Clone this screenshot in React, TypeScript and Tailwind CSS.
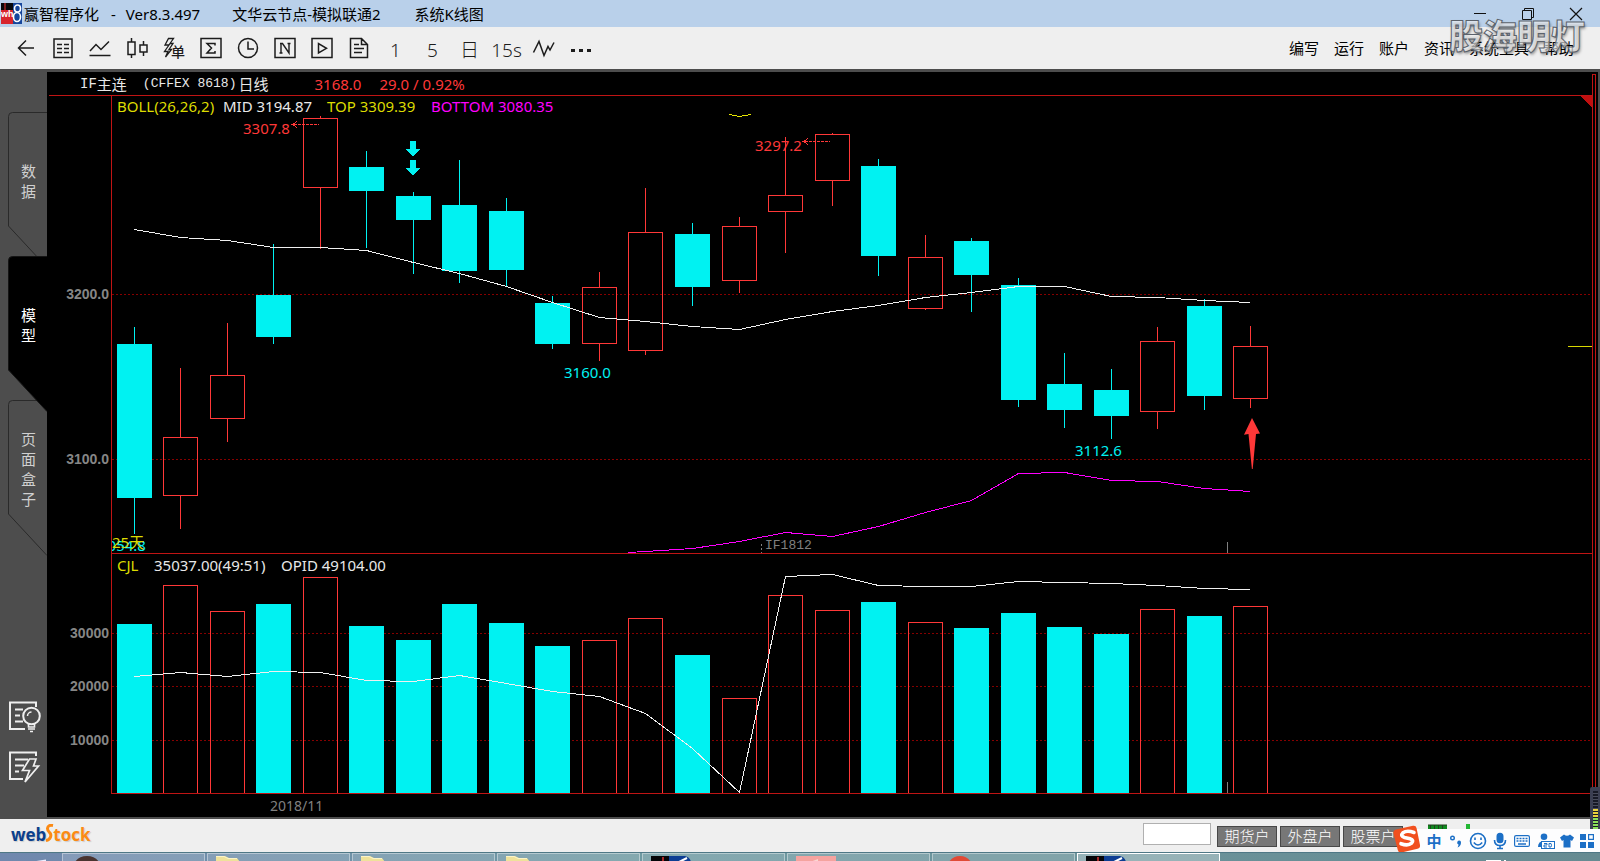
import React from 'react';
import type { ReactNode } from 'react';

type Candle = {
  x: number;
  up: boolean;
  high: number;
  top: number;
  bottom: number;
  low: number;
  volume: number;
};

const row = (x: number, up: boolean, high: number, top: number, bottom: number, low: number, volume: number): Candle => ({
  x, up, high, top, bottom, low, volume,
});

const candles: Candle[] = [
  row(117, false, 327, 344, 498, 534, 624),
  row(163, true, 368, 437, 496, 529, 585),
  row(210, true, 323, 375, 419, 442, 611),
  row(256, false, 244, 295, 337, 344, 604),
  row(303, true, 116, 118, 188, 249, 577),
  row(349, false, 151, 167, 191, 248, 626),
  row(396, false, 192, 196, 220, 274, 640),
  row(442, false, 160, 205, 271, 283, 604),
  row(489, false, 198, 211, 270, 286, 623),
  row(535, false, 296, 303, 344, 349, 646),
  row(582, true, 272, 287, 344, 361, 640),
  row(628, true, 188, 232, 351, 355, 618),
  row(675, false, 223, 234, 287, 306, 655),
  row(722, true, 217, 226, 281, 293, 698),
  row(768, true, 137, 195, 212, 253, 595),
  row(815, true, 133, 134, 181, 206, 610),
  row(861, false, 159, 166, 256, 276, 602),
  row(908, true, 235, 257, 309, 310, 622),
  row(954, false, 238, 241, 275, 312, 628),
  row(1001, false, 278, 285, 400, 407, 613),
  row(1047, false, 353, 384, 410, 428, 627),
  row(1094, false, 369, 390, 416, 439, 634),
  row(1140, true, 327, 341, 412, 429, 609),
  row(1187, false, 299, 306, 396, 410, 616),
  row(1233, true, 326, 346, 399, 408, 606),
];

const BODY = 35;
const mid = [229, 237, 240, 247, 247, 250, 262, 273, 286, 302, 317, 321, 326, 329, 319, 311, 305, 297, 292, 286, 286, 296, 297, 300, 302];
const opid = [676, 672, 676, 671, 672, 680, 681, 675, 683, 691, 696, 713, 748, 792, 576, 574, 585, 586, 586, 581, 582, 583, 585, 588, 589];
const lower = [551, 548, 541, 532, 536, 526, 512, 500, 473, 472, 480, 481, 488, 491];

const toPoints = (ys: number[], from = 0) =>
  ys.map((y, i) => `${candles[i + from].x + 17.5},${y + 0.5}`).join(' ');

const PLOT = { x: 112, width: 1480 };
const PRICE = { y: 96, height: 457 };
const VOLUME = { y: 554, height: 239 };

const at = (x: number, y: number, box: { y: number; height: number }) => ({
  left: `${((x - PLOT.x) / PLOT.width) * 100}%`,
  top: `${((y - box.y) / box.height) * 100}%`,
});

const RED = '#ff3838';
const CYAN = '#00f2f2';

function Grid({ ys }: { ys: number[] }) {
  return (
    <g stroke="#860000" strokeDasharray="2 2">
      {ys.map((y) => (
        <line key={y} x1={112} x2={1592} y1={y + 0.5} y2={y + 0.5} />
      ))}
    </g>
  );
}

function Body({ x, top, bottom, up }: { x: number; top: number; bottom: number; up: boolean }) {
  return up ? (
    <rect x={x + 0.5} y={top + 0.5} width={BODY - 1} height={bottom - top - 1} fill="none" stroke={RED} />
  ) : (
    <rect x={x} y={top} width={BODY} height={bottom - top} fill={CYAN} />
  );
}

function PricePlot() {
  return (
    <svg className="block h-full w-full" viewBox="112 96 1480 457" preserveAspectRatio="none" shapeRendering="crispEdges" aria-hidden="true">
      <Grid ys={[294, 459]} />
      {candles.map((c) => (
        <g key={c.x}>
          <rect x={c.x + 17} y={c.high} width={1} height={c.top - c.high} fill={c.up ? RED : CYAN} />
          <rect x={c.x + 17} y={c.bottom} width={1} height={c.low - c.bottom} fill={c.up ? RED : CYAN} />
          <Body x={c.x} top={c.top} bottom={c.bottom} up={c.up} />
        </g>
      ))}
      <polyline points={toPoints(mid)} fill="none" stroke="#f0f0f0" />
      <polyline points={`628,552.5 ${toPoints(lower, 11)}`} fill="none" stroke="#f0f" />
      <polyline points="729,114.5 739.5,116.5 751,114.5" fill="none" stroke="#e6e600" />
      <line x1={1568} x2={1592} y1={346.5} y2={346.5} stroke="#d8d800" />
      <g fill="none" stroke={RED}>
        <path d="M294 124.5H319" strokeDasharray="3 1" />
        <path d="M297 121.5l-4 3 4 3M291 124.5h4" />
        <path d="M805 141.5H830" strokeDasharray="3 1" />
        <path d="M808 138.5l-4 3 4 3M802 141.5h4" />
      </g>
      <g fill={CYAN}>
        <path d="M410 141h6v8h4l-7 8-7-8h4z" />
        <path d="M410 160h6v8h4l-7 8-7-8h4z" />
      </g>
      <path d="M1252 418l8 15.500-4 .5-3.300 35h-.8l-3.400-35-4.500.8z" fill={RED} shapeRendering="auto" />
      <path d="M761.500 544V553" stroke="#808080" strokeDasharray="2 2" />
      <path d="M1227.500 542V553" stroke="#808080" />
      <path d="M1580 96h12v12z" fill="#c00f0f" />
    </svg>
  );
}

function VolumePlot() {
  return (
    <svg className="block h-full w-full" viewBox="112 554 1480 239" preserveAspectRatio="none" shapeRendering="crispEdges" aria-hidden="true">
      <Grid ys={[633, 686, 740]} />
      {candles.map((c) => (
        <Body key={c.x} x={c.x} top={c.volume} bottom={c.up ? 795 : 793} up={c.up} />
      ))}
      <polyline points={toPoints(opid)} fill="none" stroke="#f0f0f0" />
      <path d="M1227.500 782V793" stroke="#808080" />
    </svg>
  );
}

function Note({ x, y, box, className, children }: { x: number; y: number; box: { y: number; height: number }; className: string; children: ReactNode }) {
  return (
    <span className={`absolute -translate-y-1/2 whitespace-nowrap leading-5 ${className}`} style={at(x, y, box)}>
      {children}
    </span>
  );
}

function AxisLabel({ y, box, children }: { y: number; box: { y: number; height: number }; children: ReactNode }) {
  return (
    <span
      className="absolute right-[2px] -translate-y-1/2 font-['Liberation_Sans',sans-serif] text-sm leading-4 font-bold text-[#868686]"
      style={{ top: at(0, y, box).top }}
    >
      {children}
    </span>
  );
}

const Icon = ({ children }: { children: ReactNode }) => (
  <svg width="24" height="24" viewBox="0 0 24 24" fill="none" stroke="#1c1c1c" strokeWidth="1.500">
    {children}
  </svg>
);

const tools: { name: string; node: ReactNode }[] = [
  { name: '返回', node: <Icon><path d="M20 12H4.500M12 4.500L4.500 12l7.500 7.500" /></Icon> },
  { name: '报价', node: <Icon><rect x="3" y="3" width="18" height="18.500" /><path d="M6 8.500h5M13 8.500h5M6 12.500h5M13 12.500h5M6 16.500h5M13 16.500h5" /></Icon> },
  { name: '分时', node: <Icon><path d="M2 15l6-6.500 5 5 8-8M1.500 19.500h21" /></Icon> },
  { name: 'K线', node: <Icon><rect x="3" y="6" width="7" height="12.500" /><path d="M6.500 2v4M6.500 18.500V22M18.500 5v4M18.500 16v4" /><rect x="15" y="9" width="7" height="7" /></Icon> },
  {
    name: '闪电单',
    node: (
      <Icon>
        <path d="M11.500 2.500H6.500L3 9h4L2.500 15.500H6L3.500 21l6-7.500H7l4-6H8z" strokeWidth="1.300" />
        <text x="9" y="20.500" fontSize="14" fontWeight="500" fontFamily="Noto Sans CJK SC" fill="#1c1c1c" stroke="none">单</text>
      </Icon>
    ),
  },
  { name: '求和', node: <Icon><rect x="2" y="2.500" width="20" height="19" /><path d="M16 9.500V7.500H8l4.500 4.500L8 17h8v-2" /></Icon> },
  { name: '周期', node: <Icon><circle cx="12" cy="12" r="9.500" /><path d="M12 5.500V13h6" /></Icon> },
  { name: '指标', node: <Icon><rect x="2" y="2.500" width="20" height="19" /><path d="M6.500 17h3M14.500 7.500h3M7 7.500h2.500l6.500 9.500V7.500M8 17V7.500" strokeWidth="1.400" /></Icon> },
  { name: '播放', node: <Icon><rect x="2" y="2.500" width="20" height="19" /><path d="M8.500 7.500v9.500l8-4.700z" /></Icon> },
  { name: '文档', node: <Icon><path d="M3.500 2.500h11l6 6v13h-17zM14.500 2.500v6h6M7 8.500h5M7 12.500h10M7 16.500h8" /></Icon> },
  { name: '1分钟', node: <span className="pt-[3px]">1</span> },
  { name: '5分钟', node: <span className="pt-[3px]">5</span> },
  { name: '日线', node: <span className="pt-[3px]">日</span> },
  { name: '15秒', node: <span className="pt-[3px]">15s</span> },
  { name: '波动', node: <Icon><path d="M1.500 16.500L7 5.500l5 14 4-9 2 3.500 4-7.500" /></Icon> },
  { name: '更多', node: <Icon><path d="M2 14.500h4M10 14.500h4M18 14.500h4" strokeWidth="3" /></Icon> },
];

function BrandMark() {
  return (
    <svg width="21" height="21" viewBox="0 0 21 21" aria-hidden="true">
      <rect width="21" height="21" fill="#08080c" />
      <path d="M0 7h12v14H0z" fill="#d8242c" />
      <path d="M12 0h9v21h-9z" fill="#16469c" />
      <path d="M4 0v7" stroke="#e33" />
      <text x="0" y="14" fontSize="9" fontWeight="bold" fontFamily="Liberation Sans" fill="#fff">wh</text>
      <ellipse cx="16.500" cy="5.500" rx="3" ry="3.500" fill="none" stroke="#fff" strokeWidth="1.600" />
      <ellipse cx="16" cy="14" rx="3.500" ry="4.500" fill="none" stroke="#fff" strokeWidth="1.600" />
    </svg>
  );
}

function TitleBar() {
  return (
    <header className="relative z-30 flex h-[27px] shrink-0 items-center bg-[#b9d0ea] text-[15px] leading-5 text-black">
      <div className="flex items-center gap-[2px] pl-px">
        <BrandMark />
        <h1 className="whitespace-pre">赢智程序化</h1>
      </div>
      <span className="ml-3">-</span>
      <span className="ml-[10px]">Ver8.3.497</span>
      <span className="ml-8">文华云节点-模拟联通2</span>
      <span className="ml-[34px]">系统K线图</span>
      <div className="ml-auto flex">
        <button aria-label="最小化" className="flex w-12 justify-center">
          <svg width="14" height="14" viewBox="0 0 14 14" stroke="#111" fill="none"><path d="M1 6.500h12" /></svg>
        </button>
        <button aria-label="还原" className="flex w-12 justify-center">
          <svg width="14" height="14" viewBox="0 0 14 14" stroke="#111" fill="none"><path d="M1.500 3.500h9v9h-9zM3.500 3.500v-2h9v9h-2" /></svg>
        </button>
        <button aria-label="关闭" className="flex w-12 justify-center">
          <svg width="14" height="14" viewBox="0 0 14 14" stroke="#111" fill="none"><path d="M1 1l12 12M13 1L1 13" strokeWidth="1.200" /></svg>
        </button>
      </div>
      <span
        className="pointer-events-none absolute top-[14px] right-[15px] text-[34px] leading-[44px] font-black text-white/60 [-webkit-text-stroke:1px_#5b626b] [text-shadow:1px_2px_3px_rgba(0,0,0,0.4)]"
      >
        股海明灯
      </span>
    </header>
  );
}

function ToolBar() {
  return (
    <div className="flex h-[42px] shrink-0 items-center justify-between bg-[#efefef]">
      <div className="flex pl-[7px]">
        {tools.map((t) => (
          <button key={t.name} aria-label={t.name} className="flex h-8 w-[37px] items-center justify-center text-[19px] leading-6 font-light text-[#1c1c1c]">
            {t.node}
          </button>
        ))}
      </div>
      <nav className="flex gap-[15px] pr-[26px] text-[15px] leading-5 text-black">
        {['编写', '运行', '账户', '资讯', '系统工具', '帮助'].map((m) => (
          <a key={m} href="#" className="whitespace-nowrap">{m}</a>
        ))}
      </nav>
    </div>
  );
}

function SideTab({ label, active }: { label: string; active?: boolean }) {
  return (
    <button className={`relative -mb-3 ml-2 block h-[156px] w-[39px] ${active ? 'z-10 text-white' : 'text-[#d0d0d0]'}`}>
      <svg className="absolute inset-0" width="39" height="156" viewBox="0 0 39 156" aria-hidden="true">
        <path d="M39 .5H4.500Q.5 .5 .5 4.500V114L39 155.500" fill={active ? '#000' : '#4d4d4d'} stroke={active ? '#151515' : '#2a2a2a'} />
      </svg>
      <span className="relative flex h-full flex-col items-center justify-center pb-[18px] pl-[2px] text-[15px] leading-5">
        {label.split('').map((ch) => (
          <span key={ch}>{ch}</span>
        ))}
      </span>
    </button>
  );
}

function SideBar() {
  return (
    <aside className="flex w-[47px] shrink-0 flex-col bg-[#4d4d4d] pt-[43px]">
      <SideTab label="数据" />
      <SideTab label="模型" active />
      <SideTab label="页面盒子" />
      <div className="mt-auto mb-9 flex flex-col gap-[18px] pl-2">
        <button aria-label="提示">
          <svg width="34" height="32" viewBox="0 0 34 32" fill="none" stroke="#efefef" strokeWidth="2">
            <path d="M28 6V1.500H2V28h15M7 8.500h8M7 14.500h5M7 20.500h8" />
            <circle cx="23.500" cy="15" r="8.300" />
            <path d="M19.500 15a4 4 0 0 1 4-4" strokeWidth="1.500" />
            <path d="M20.500 23v3h6v-3M20 28h7M22 30.500h3" strokeWidth="1.600" />
          </svg>
        </button>
        <button aria-label="快捷">
          <svg width="34" height="32" viewBox="0 0 34 32" fill="none" stroke="#efefef" strokeWidth="2">
            <path d="M28 5V1.500H2V28h13M7 8.500h13M7 14.500h9M7 20.500h4" />
            <path d="M21.500 8h6.500l-2.500 7h5L17 31l4.500-11.500H14.500z" strokeWidth="1.700" />
          </svg>
        </button>
      </div>
    </aside>
  );
}

function Chart() {
  return (
    <section className="flex min-w-0 flex-1 bg-black font-['Noto_Sans','Noto_Sans_CJK_SC',sans-serif] text-[15px]">
      <div className="flex min-w-0 flex-1 flex-col">
        <div className="ml-[2px] flex h-6 shrink-0 items-center border-b border-[#c01414] pl-[31px] leading-5 whitespace-pre text-[#e8e8e8]">
          <span className="font-['Liberation_Mono','Noto_Sans_CJK_SC',monospace] text-sm">IF</span>
          <span>主连</span>
          <span className="ml-4 font-['Liberation_Mono',monospace] text-[13px]">(CFFEX 8618)</span>
          <span className="ml-[2px]">日线</span>
          <span className="ml-[46px] text-[#ff3838]">3168.0</span>
          <span className="ml-[18px] text-[#ff3838]">29.0 / 0.92%</span>
        </div>
        <div className="flex min-h-0 grow-[457] basis-0">
          <div className="relative w-16 shrink-0">
            <AxisLabel y={294} box={PRICE}>3200.0</AxisLabel>
            <AxisLabel y={459} box={PRICE}>3100.0</AxisLabel>
          </div>
          <div className="relative min-w-0 flex-1 overflow-hidden border-l border-[#c01414]">
            <PricePlot />
            <div className="absolute top-0 left-[5px] flex leading-5 whitespace-nowrap">
              <span className="w-[106px] text-[#dcdc00]">BOLL(26,26,2)</span>
              <span className="w-[104px] text-[#e8e8e8]">MID 3194.87</span>
              <span className="w-[104px] text-[#dcdc00]">TOP 3309.39</span>
              <span className="text-[#f0f]">BOTTOM 3080.35</span>
            </div>
            <Note x={243} y={128} box={PRICE} className="text-[#ff3838]">3307.8</Note>
            <Note x={755} y={145} box={PRICE} className="text-[#ff3838]">3297.2</Note>
            <Note x={564} y={372} box={PRICE} className="text-[#00f2f2]">3160.0</Note>
            <Note x={1075} y={450} box={PRICE} className="text-[#00f2f2]">3112.6</Note>
            <Note x={99} y={545} box={PRICE} className="text-[#00f2f2]">3054.8</Note>
            <Note x={112} y={542} box={PRICE} className="text-[#dcdc00]">25天</Note>
            <Note x={765} y={546} box={PRICE} className="font-['Liberation_Mono',monospace] text-[13px] text-[#808080]">IF1812</Note>
          </div>
        </div>
        <div className="flex min-h-0 grow-[241] basis-0">
          <div className="relative w-16 shrink-0">
            <AxisLabel y={633} box={VOLUME}>30000</AxisLabel>
            <AxisLabel y={686} box={VOLUME}>20000</AxisLabel>
            <AxisLabel y={739} box={VOLUME}>10000</AxisLabel>
          </div>
          <div className="relative min-w-0 flex-1 overflow-hidden border-y border-l border-[#c01414]">
            <VolumePlot />
            <div className="absolute top-px left-[5px] flex leading-5 whitespace-nowrap text-[#e8e8e8]">
              <span className="w-[37px] text-[#dcdc00]">CJL</span>
              <span className="w-[127px]">35037.00(49:51)</span>
              <span>OPID 49104.00</span>
            </div>
          </div>
        </div>
        <div className="h-[23px] shrink-0 pl-[223px] text-sm leading-6 text-[#808080]">2018/11</div>
      </div>
      <div className="mt-[2px] mr-[2px] w-1 shrink-0 border border-[#c01414]" />
    </section>
  );
}

function ImeBar() {
  return (
    <div className="absolute right-0 bottom-0 flex h-[23px] items-center bg-[#fdfdfe] pr-px pl-6 text-[#1c6fc6]">
      <svg className="absolute -top-1 -left-[7px]" width="30" height="29" viewBox="0 0 30 29" aria-hidden="true">
        <path d="M4 4.500L21 .8q3-.5 3.600 2.400L28 20q.5 3-2.500 3.800L9.500 27.500q-3 .6-3.700-2.400L1.500 8.500Q1 5.300 4 4.500z" fill="#f1501f" />
        <path d="M22 7.500q-7-2.500-11 .2-3.300 3.300 1.500 4.800l5.500 1.200q4.500 1.500 1.500 4.500-3.500 3-10.500.5" fill="none" stroke="#fff" strokeWidth="3.600" strokeLinecap="round" />
      </svg>
      <button className="w-[22px] text-[15px] leading-5 font-bold">中</button>
      <button aria-label="标点" className="flex w-[22px] justify-center">
        <svg width="14" height="14" viewBox="0 0 14 14"><circle cx="3.500" cy="4" r="1.800" fill="none" stroke="currentColor" strokeWidth="1.400" /><path d="M10 6.500a1.900 1.900 0 0 1 2 2q0 3.500-3.500 5 1-1.500 1-3-1.600-.5-1.300-2 .3-2 1.800-2z" fill="currentColor" /></svg>
      </button>
      <button aria-label="表情" className="flex w-[22px] justify-center">
        <svg width="18" height="18" viewBox="0 0 18 18" fill="none" stroke="currentColor" strokeWidth="1.600"><circle cx="9" cy="9" r="7.500" /><path d="M6 5.500v2.500M12 5.500v2.500M4.800 10.500q4.200 5 8.400 0" /></svg>
      </button>
      <button aria-label="语音" className="flex w-[22px] justify-center">
        <svg width="14" height="18" viewBox="0 0 14 18" fill="none" stroke="currentColor" strokeWidth="1.600"><rect x="4.300" y="1.500" width="5.400" height="9" rx="2.700" fill="currentColor" /><path d="M1.500 8q0 5.500 5.500 5.500T12.500 8M7 13.500V17M4 16.500h6" /></svg>
      </button>
      <button aria-label="键盘" className="flex w-[22px] justify-center">
        <svg width="16" height="12" viewBox="0 0 16 12"><rect x=".6" y=".6" width="14.800" height="10.800" rx="1.500" fill="#fff" stroke="currentColor" strokeWidth="1.200" /><path d="M2.500 3.500h11M2.500 6h11" stroke="currentColor" strokeWidth="1.600" strokeDasharray="2 1" /><path d="M4 9h8" stroke="currentColor" strokeWidth="1.500" /></svg>
      </button>
      <button aria-label="账号" className="flex w-[26px] justify-center">
        <svg width="18" height="16" viewBox="0 0 18 16"><circle cx="7" cy="3.800" r="3.300" fill="currentColor" /><path d="M1 14q0-6 6-6t6 6z" fill="currentColor" /><rect x="4.500" y="8.500" width="13" height="7" fill="#fff" stroke="currentColor" /><path d="M7 10.500h3v1.500H7v2h3M12 10.500v3.500h2q1-1.700 0-3.500z" fill="none" stroke="currentColor" /></svg>
      </button>
      <button aria-label="皮肤" className="flex w-[16px] justify-center">
        <svg width="14" height="14" viewBox="0 0 14 14"><path d="M4 .5q3 2.500 6 0l4 3-2 3.500-1.500-1V13.500h-7V6L2 7 0 3.500z" fill="currentColor" /></svg>
      </button>
      <button aria-label="工具箱" className="flex w-[24px] justify-center">
        <svg width="14" height="14" viewBox="0 0 14 14" fill="currentColor"><path d="M0 0h6v6H0zM0 8h6v6H0zM8 8h6v6H8z" /><path d="M8.600.6h4.800v4.800H8.600z" fill="none" stroke="currentColor" strokeWidth="1.200" /></svg>
      </button>
    </div>
  );
}

function StatusBar() {
  return (
    <footer className="relative flex h-[33px] shrink-0 items-center bg-[#efefef] pb-[3px] pl-[11px]">
      <div className="flex items-end font-['Open_Sans',sans-serif] text-[17px] leading-5 font-bold [text-shadow:1px_1px_1px_#ccc]">
        <span className="text-[#0b3f8c]">web</span>
        <svg className="-mx-px mb-[3px]" width="9" height="18" viewBox="0 0 9 18" aria-hidden="true">
          <path d="M8 1.500Q3 .5 2.500 4.500 2.500 7 4.500 8.500T5.500 13 1 16.500" fill="none" stroke="#fb8a14" strokeWidth="3" />
        </svg>
        <span className="text-[#fb8a14]">tock</span>
      </div>
      <div className="mr-[197px] ml-auto flex items-center gap-[3px]">
        <input aria-label="代码" className="mr-[3px] h-[22px] w-[68px] border border-[#b0b0b0] bg-white px-1 text-sm" />
        {['期货户', '外盘户', '股票户'].map((t) => (
          <button key={t} className="mt-1 h-[21px] w-[60px] border border-[#484848] bg-[#777] text-[15px] leading-[18px] font-light text-white">
            {t}
          </button>
        ))}
      </div>
      <svg className="absolute top-[5px] right-[130px]" width="42" height="7" viewBox="0 0 42 7" aria-hidden="true">
        <path d="M0 1h19v6H0z" fill="#0f8a1f" />
        <path d="M0 1h19M2.500 1v6M6.500 1v6M10.500 1v6M14.500 1v6" stroke="#22401f" />
        <path d="M33 5h4v2h-4zM38 0h4v7h-4z" fill="#22b733" />
      </svg>
      <svg className="absolute right-0 bottom-[22px]" width="10" height="43" viewBox="0 0 10 43" aria-hidden="true">
        <rect width="12" height="44" rx="2" fill="#3b3f52" />
        <rect x="3" y="4" width="5" height="39" fill="#171a26" />
        <path d="M5.500 6v16" stroke="#4a4d5c" strokeWidth="5" strokeDasharray="1 2" />
        <path d="M5.500 22v9" stroke="#e9d23c" strokeWidth="5" strokeDasharray="2 1" />
        <path d="M5.500 31v12" stroke="#8be05a" strokeWidth="5" strokeDasharray="2 1" />
      </svg>
      <ImeBar />
    </footer>
  );
}

const Folder = () => (
  <svg width="24" height="6" viewBox="0 0 24 6"><path d="M0 0h9l4 2h8l3 4H0z" fill="#efe29a" /><path d="M0 .5h8l4 2h9" fill="none" stroke="#fbf4c8" /></svg>
);
const Quote = () => (
  <svg width="40" height="6" viewBox="0 0 40 6"><path d="M0 0h18v6H0z" fill="#050508" /><path d="M18 0h16q5 1 6 6H18z" fill="#0c3d93" /><path d="M12 1v5" stroke="#d33" strokeWidth="1.500" /><path d="M28 6l8-4" stroke="#fff" strokeWidth="2" /></svg>
);

const windows: { name: string; icon: ReactNode }[] = [
  { name: '人物', icon: <svg className="ml-1" width="24" height="6" viewBox="0 0 24 6"><path d="M0 6Q4 0 12 0t12 6z" fill="#4a3430" /></svg> },
  { name: '文件夹一', icon: <Folder /> },
  { name: '文件夹二', icon: <Folder /> },
  { name: '文件夹三', icon: <Folder /> },
  { name: '行情一', icon: <Quote /> },
  { name: '图片', icon: <svg width="40" height="6" viewBox="0 0 40 6"><path d="M0 0h40v6H0z" fill="#f5a39f" /><path d="M14 6l8-3v3z" fill="#fbd5d2" /></svg> },
  { name: '浏览器', icon: <svg className="ml-2" width="22" height="6" viewBox="0 0 22 6"><path d="M0 6Q4 0 11 0t11 6z" fill="#e04a36" /></svg> },
  { name: '行情二', icon: <Quote /> },
];

function TaskBar() {
  return (
    <div className="relative flex h-[9px] shrink-0 gap-[2px] overflow-hidden border-t border-[#4f7886] bg-linear-to-r from-[#7088ae] via-[#6f9aa2] via-40% to-[#668b92] pl-[62px]">
      <svg className="absolute top-[6px] left-[30px]" width="18" height="3" viewBox="0 0 18 3" aria-hidden="true"><path d="M0 3L16 .5V3z" fill="#eef" /></svg>
      {windows.map((w, i) => (
        <button
          key={w.name}
          aria-label={w.name}
          className={`flex h-5 w-[143px] shrink-0 items-start border pt-[2px] pl-2 ${i === 7 ? 'border-white bg-white/30' : 'border-white/40 bg-white/15'}`}
        >
          {w.icon}
        </button>
      ))}
      <svg className="absolute top-[7px] right-[90px]" width="24" height="2" viewBox="0 0 24 2" aria-hidden="true"><path d="M0 0h15v2H0zM18 0h2v2h-2z" fill="#fff" /></svg>
    </div>
  );
}

export default function App() {
  return (
    <div className="flex h-screen flex-col overflow-hidden bg-[#4d4d4d] font-['Noto_Sans','Noto_Sans_CJK_SC',sans-serif]">
      <TitleBar />
      <ToolBar />
      <main className="flex min-h-0 flex-1">
        <SideBar />
        <div className="flex min-w-0 flex-1 pt-[3px] pr-[2px] pb-[2px]">
          <Chart />
        </div>
      </main>
      <StatusBar />
      <TaskBar />
    </div>
  );
}
